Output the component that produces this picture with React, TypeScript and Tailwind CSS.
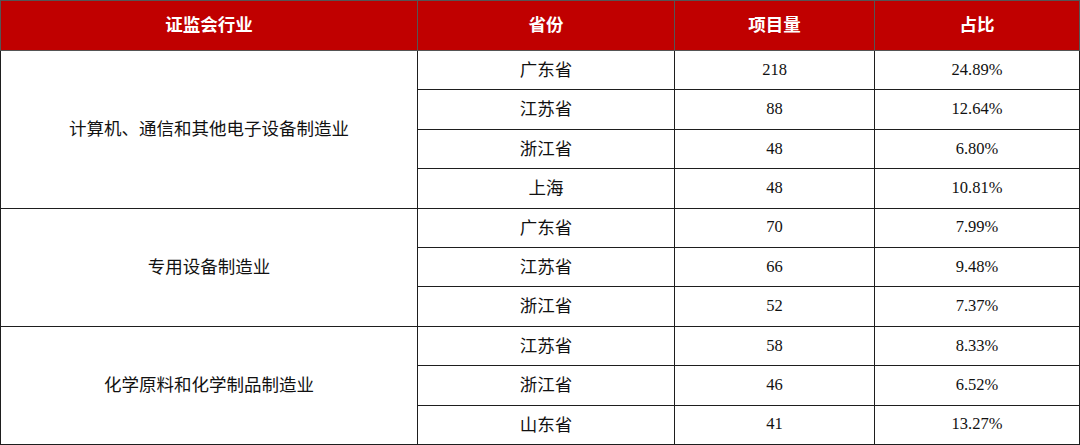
import React from 'react';

type Row = { province: string; count: number; ratio: string };
type Group = { industry: string; rows: Row[] };

const groups: Group[] = [
  {
    industry: '计算机、通信和其他电子设备制造业',
    rows: [
      { province: '广东省', count: 218, ratio: '24.89%' },
      { province: '江苏省', count: 88, ratio: '12.64%' },
      { province: '浙江省', count: 48, ratio: '6.80%' },
      { province: '上海', count: 48, ratio: '10.81%' },
    ],
  },
  {
    industry: '专用设备制造业',
    rows: [
      { province: '广东省', count: 70, ratio: '7.99%' },
      { province: '江苏省', count: 66, ratio: '9.48%' },
      { province: '浙江省', count: 52, ratio: '7.37%' },
    ],
  },
  {
    industry: '化学原料和化学制品制造业',
    rows: [
      { province: '江苏省', count: 58, ratio: '8.33%' },
      { province: '浙江省', count: 46, ratio: '6.52%' },
      { province: '山东省', count: 41, ratio: '13.27%' },
    ],
  },
];

const font = "font-['Liberation_Serif','Noto_Sans_CJK_SC',serif]";
const cell = 'border border-[#1e1e1e] text-center align-middle p-0';
const zh = 'text-[17.5px]';
const num = 'text-[16.5px]';

export default function App() {
  return (
    <div className={`w-[1080px] h-[445px] bg-white ${font} text-[#111]`}>
      <table className="table-fixed border-collapse w-[1079px]">
        <colgroup>
          <col className="w-[417px]" />
          <col className="w-[257px]" />
          <col className="w-[200px]" />
          <col className="w-[205px]" />
        </colgroup>
        <thead>
          <tr className={`h-[50px] bg-[#c00000] text-white font-bold ${zh}`}>
            <th className={`${cell} border-[#555]`}>证监会行业</th>
            <th className={`${cell} border-[#555]`}>省份</th>
            <th className={`${cell} border-[#555]`}>项目量</th>
            <th className={`${cell} border-[#555]`}>占比</th>
          </tr>
        </thead>
        <tbody>
          {groups.map((g) =>
            g.rows.map((r, i) => (
              <tr key={g.industry + r.province} className="h-[39.4px]">
                {i === 0 && (
                  <td rowSpan={g.rows.length} className={`${cell} ${zh}`}>
                    {g.industry}
                  </td>
                )}
                <td className={`${cell} ${zh}`}>{r.province}</td>
                <td className={`${cell} ${num}`}>{r.count}</td>
                <td className={`${cell} ${num}`}>{r.ratio}</td>
              </tr>
            ))
          )}
        </tbody>
      </table>
    </div>
  );
}
